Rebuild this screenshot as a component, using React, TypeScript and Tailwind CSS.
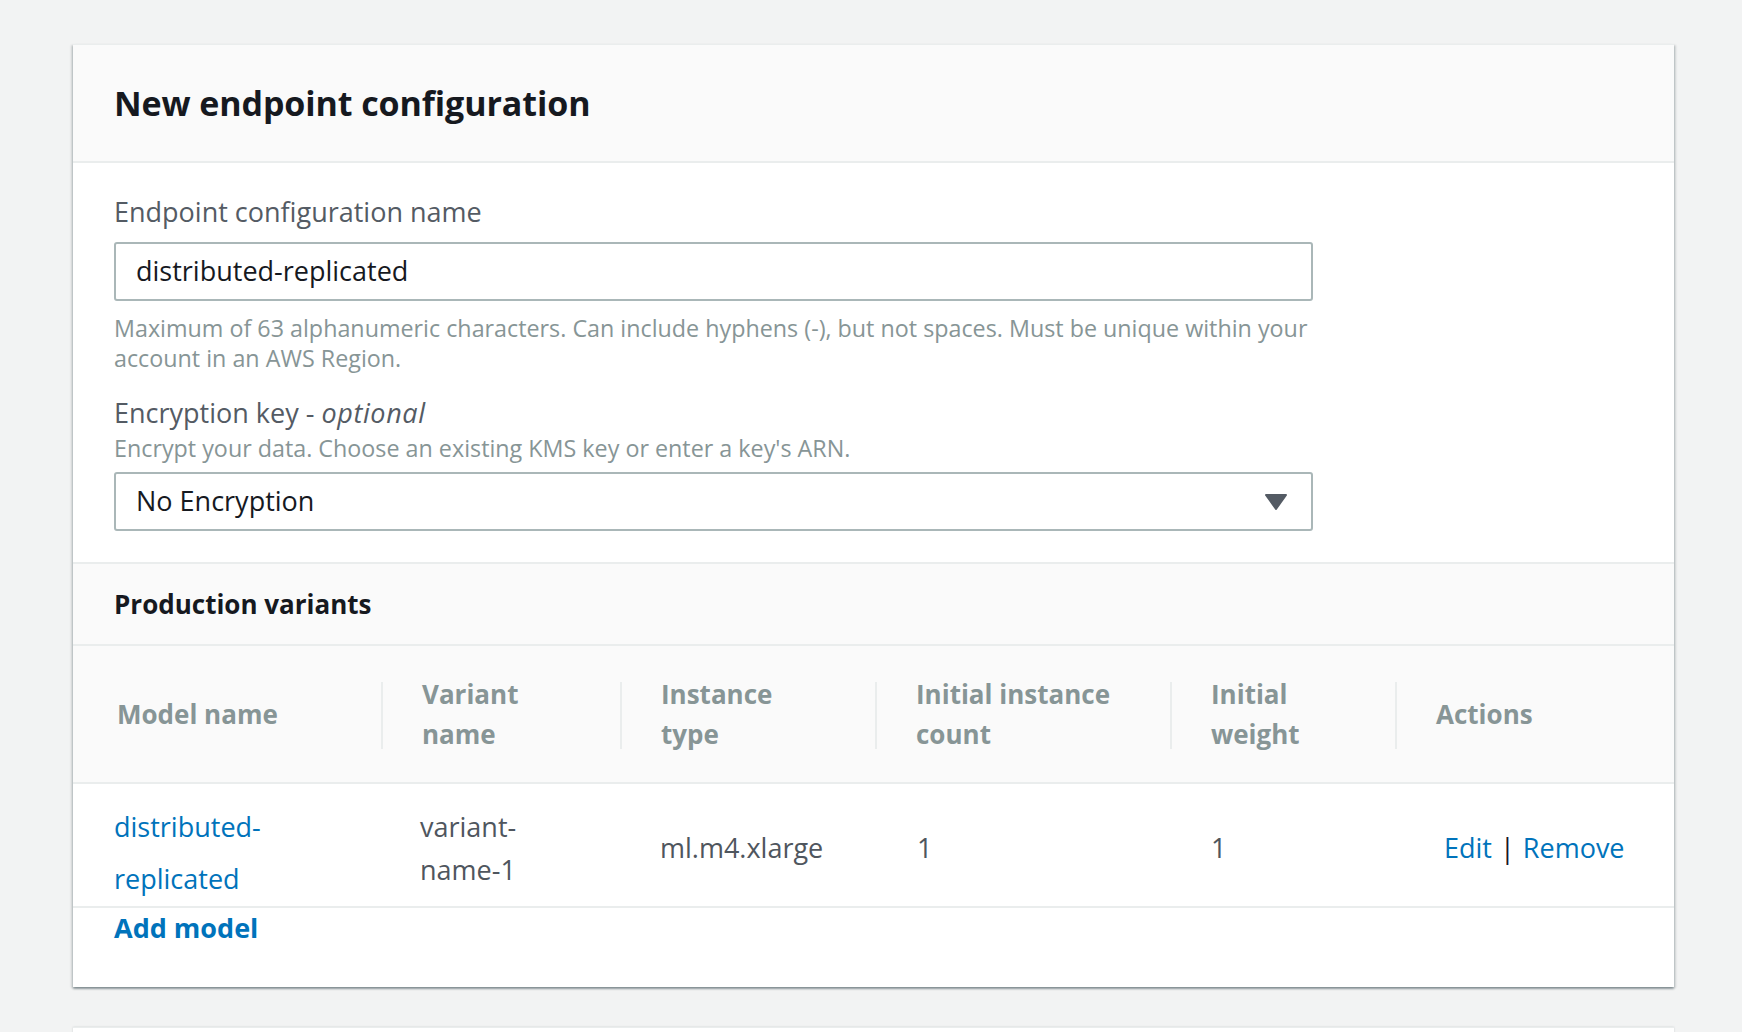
const columns = [
  { key: 'model', lines: ['Model name'], width: 'w-[308px]', divider: false },
  { key: 'variant', lines: ['Variant', 'name'], width: 'w-[239px]', divider: true },
  { key: 'instance', lines: ['Instance', 'type'], width: 'w-[255px]', divider: true },
  { key: 'count', lines: ['Initial instance', 'count'], width: 'w-[295px]', divider: true },
  { key: 'weight', lines: ['Initial', 'weight'], width: 'w-[225px]', divider: true },
  { key: 'actions', lines: ['Actions'], width: 'flex-1', divider: true },
];

export default function App() {
  return (
    <div className="h-[1032px] overflow-hidden bg-[#f2f3f3] pt-[44px] pl-[73px] font-['Open_Sans',sans-serif]">
      <section className="w-[1601px] border-t border-[#eaeded] bg-white shadow-[0_2px_2px_0_rgba(0,28,36,0.35),2px_1px_2px_0_rgba(0,28,36,0.12),-2px_1px_2px_0_rgba(0,28,36,0.12)]">
        <header className="flex h-[118px] items-center border-b-2 border-[#eaeded] bg-[#fafafa] px-[41px]">
          <h1 className="text-[34px] font-bold tracking-[-0.1px] text-[#16191f]">New endpoint configuration</h1>
        </header>

        <div className="px-[41px] pt-[32px] pb-[31px]">
          <label className="block text-[27px] leading-[34px] text-[#545b64]">Endpoint configuration name</label>
          <div className="mt-[13px] flex h-[59px] w-[1199px] items-center rounded-[3px] border-2 border-[#aab7b8] px-[20px] text-[27px] text-[#16191f]">
            distributed-replicated
          </div>
          <p className="mt-[12px] w-[1199px] text-[23.3px] leading-[30px] text-[#879596]">
            Maximum of 63 alphanumeric characters. Can include hyphens (-), but not spaces. Must be unique within your account in an AWS Region.
          </p>

          <label className="mt-[23px] block text-[27px] leading-[34px] text-[#545b64]">
            Encryption key - <i className="tracking-[0.6px]">optional</i>
          </label>
          <p className="mt-[3px] text-[23.3px] leading-[30px] text-[#879596]">Encrypt your data. Choose an existing KMS key or enter a key's ARN.</p>
          <div className="mt-[9px] flex h-[59px] w-[1199px] items-center justify-between rounded-[3px] border-2 border-[#aab7b8] pl-[20px] pr-[24px] text-[27px] text-[#16191f]">
            <span>No Encryption</span>
            <svg width="22" height="16" viewBox="0 0 22 16" aria-hidden="true">
              <path d="M1 1 L21 1 L11 15 Z" fill="#545b64" stroke="#545b64" strokeWidth="2" strokeLinejoin="round" />
            </svg>
          </div>
        </div>

        <div className="flex h-[84px] items-center border-y-2 border-[#eaeded] bg-[#fafafa] px-[41px]">
          <h2 className="text-[26px] font-bold text-[#16191f]">Production variants</h2>
        </div>

        <div className="flex h-[138px] items-center border-b-2 border-[#eaeded] bg-[#fafafa]">
          {columns.map((col) => (
            <div
              key={col.key}
              className={`relative flex h-full items-center ${col.width} ${col.divider ? 'pl-[41px] before:absolute before:left-0 before:top-[36px] before:h-[67px] before:w-[2px] before:bg-[#eaeded]' : 'pl-[44px]'}`}
            >
              <div className="text-[26px] font-bold leading-[40px] text-[#879596]">
                {col.lines.map((line) => (
                  <div key={line}>{line}</div>
                ))}
              </div>
            </div>
          ))}
        </div>

        <div className="flex h-[124px] items-center border-b-2 border-[#eaeded] pt-[6px] text-[27px] text-[#4f565e]">
          <div className="w-[308px] pl-[41px] pt-[10px] leading-[52px]">
            <a className="block text-[#0073bb]">distributed-</a>
            <a className="block text-[#0073bb]">replicated</a>
          </div>
          <div className="w-[239px] pl-[39px] leading-[43px]">
            <div>variant-</div>
            <div>name-1</div>
          </div>
          <div className="w-[255px] pl-[40px]">ml.m4.xlarge</div>
          <div className="w-[295px] pl-[42px]">1</div>
          <div className="w-[225px] pl-[41px]">1</div>
          <div className="flex-1 pl-[49px]">
            <a className="text-[#0073bb]">Edit</a>
            <span className="px-[8px] text-[#16191f]">|</span>
            <a className="text-[#0073bb]">Remove</a>
          </div>
        </div>

        <div className="px-[41px] pb-[39px]">
          <a className="block text-[27px] font-bold leading-[40px] text-[#0073bb]">Add model</a>
        </div>
      </section>

      <div className="mt-[40px] h-[20px] w-[1601px] border-t border-[#eaeded] bg-white shadow-[0_0_2px_0_rgba(0,28,36,0.15)]" />
    </div>
  );
}
